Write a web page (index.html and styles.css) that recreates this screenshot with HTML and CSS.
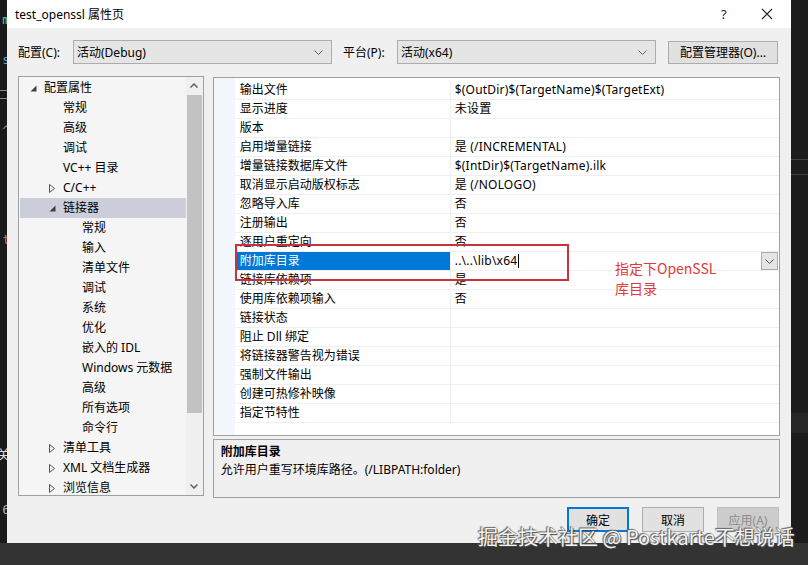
FILE: index.html
```html
<!DOCTYPE html>
<html lang="zh-CN">
<head>
<meta charset="utf-8">
<title>test_openssl 属性页</title>
<link rel="stylesheet" href="styles.css">
</head>
<body>
<div class="screen">
  <div class="main-row">
    <div class="left-strip">
      <span class="frag f1">m</span>
      <span class="frag f2">s</span>
      <span class="frag f3">二</span>
      <span class="frag f4">^</span>
      <span class="frag f5">t</span>
      <span class="frag f6">关</span>
      <span class="frag f7">6</span>
    </div>
    <div class="dialog">
      <div class="titlebar">
        <span class="title">test_openssl 属性页</span>
        <span class="help">?</span>
        <span class="close"><svg width="12" height="12" viewBox="0 0 12 12"><path d="M1 1 L11 11 M11 1 L1 11" stroke="#222" stroke-width="1.1" fill="none"/></svg></span>
      </div>
      <div class="dlg-body">
        <div class="config-row">
          <span class="cfg-label">配置(C):</span>
          <div class="combo"><span>活动(Debug)</span><svg class="chev" width="9" height="5" viewBox="0 0 9 5"><polyline points="0.5,0.5 4.5,4.5 8.5,0.5" stroke="#606060" fill="none"/></svg></div>
          <span class="cfg-label plat">平台(P):</span>
          <div class="combo"><span>活动(x64)</span><svg class="chev" width="9" height="5" viewBox="0 0 9 5"><polyline points="0.5,0.5 4.5,4.5 8.5,0.5" stroke="#606060" fill="none"/></svg></div>
          <button class="btn cfg-mgr">配置管理器(O)...</button>
        </div>
        <div class="content">
          <div class="tree">
            <div class="tree-rows">
              <div class="trow l0"><span class="arrow"><svg width="7" height="7" viewBox="0 0 7 7"><polygon points="6.5,0.5 6.5,6.5 0.5,6.5" fill="#404040"/></svg></span>配置属性</div>
              <div class="trow l1"><span class="arrow"></span>常规</div>
              <div class="trow l1"><span class="arrow"></span>高级</div>
              <div class="trow l1"><span class="arrow"></span>调试</div>
              <div class="trow l1"><span class="arrow"></span>VC++ 目录</div>
              <div class="trow l1"><span class="arrow"><svg width="6" height="9" viewBox="0 0 6 9"><polygon points="0.5,0.5 5.5,4.5 0.5,8.5" fill="none" stroke="#555"/></svg></span>C/C++</div>
              <div class="trow l1 sel"><span class="arrow"><svg width="7" height="7" viewBox="0 0 7 7"><polygon points="6.5,0.5 6.5,6.5 0.5,6.5" fill="#404040"/></svg></span>链接器</div>
              <div class="trow l2"><span class="arrow"></span>常规</div>
              <div class="trow l2"><span class="arrow"></span>输入</div>
              <div class="trow l2"><span class="arrow"></span>清单文件</div>
              <div class="trow l2"><span class="arrow"></span>调试</div>
              <div class="trow l2"><span class="arrow"></span>系统</div>
              <div class="trow l2"><span class="arrow"></span>优化</div>
              <div class="trow l2"><span class="arrow"></span>嵌入的 IDL</div>
              <div class="trow l2"><span class="arrow"></span>Windows 元数据</div>
              <div class="trow l2"><span class="arrow"></span>高级</div>
              <div class="trow l2"><span class="arrow"></span>所有选项</div>
              <div class="trow l2"><span class="arrow"></span>命令行</div>
              <div class="trow l1"><span class="arrow"><svg width="6" height="9" viewBox="0 0 6 9"><polygon points="0.5,0.5 5.5,4.5 0.5,8.5" fill="none" stroke="#555"/></svg></span>清单工具</div>
              <div class="trow l1"><span class="arrow"><svg width="6" height="9" viewBox="0 0 6 9"><polygon points="0.5,0.5 5.5,4.5 0.5,8.5" fill="none" stroke="#555"/></svg></span>XML 文档生成器</div>
              <div class="trow l1"><span class="arrow"><svg width="6" height="9" viewBox="0 0 6 9"><polygon points="0.5,0.5 5.5,4.5 0.5,8.5" fill="none" stroke="#555"/></svg></span>浏览信息</div>
            </div>
            <div class="scrollbar">
              <div class="sb-btn"><svg width="8" height="5" viewBox="0 0 8 5"><polyline points="0.5,4.5 4,1 7.5,4.5" stroke="#606060" stroke-width="1.5" fill="none"/></svg></div>
              <div class="sb-track"><div class="sb-thumb"></div></div>
              <div class="sb-btn"><svg width="8" height="5" viewBox="0 0 8 5"><polyline points="0.5,0.5 4,4 7.5,0.5" stroke="#606060" stroke-width="1.5" fill="none"/></svg></div>
            </div>
          </div>
          <div class="right-col">
            <div class="grid">
              <div class="gutter"></div>
              <div class="grows">
                <div class="grow"><div class="gname">输出文件</div><div class="gval">$(OutDir)$(TargetName)$(TargetExt)</div></div>
                <div class="grow"><div class="gname">显示进度</div><div class="gval">未设置</div></div>
                <div class="grow"><div class="gname">版本</div><div class="gval"></div></div>
                <div class="grow"><div class="gname">启用增量链接</div><div class="gval">是 (/INCREMENTAL)</div></div>
                <div class="grow"><div class="gname">增量链接数据库文件</div><div class="gval">$(IntDir)$(TargetName).ilk</div></div>
                <div class="grow"><div class="gname">取消显示启动版权标志</div><div class="gval">是 (/NOLOGO)</div></div>
                <div class="grow"><div class="gname">忽略导入库</div><div class="gval">否</div></div>
                <div class="grow"><div class="gname">注册输出</div><div class="gval">否</div></div>
                <div class="grow"><div class="gname">逐用户重定向</div><div class="gval">否</div></div>
                <div class="grow selrow"><div class="gname">附加库目录</div><div class="gval"><span class="edit">..\..\lib\x64<span class="caret"></span></span><span class="dd"><svg width="9" height="5" viewBox="0 0 9 5"><polyline points="0.5,0.5 4.5,4.5 8.5,0.5" stroke="#505050" fill="none"/></svg></span></div></div>
                <div class="grow"><div class="gname">链接库依赖项</div><div class="gval">是</div></div>
                <div class="grow"><div class="gname">使用库依赖项输入</div><div class="gval">否</div></div>
                <div class="grow"><div class="gname">链接状态</div><div class="gval"></div></div>
                <div class="grow"><div class="gname">阻止 Dll 绑定</div><div class="gval"></div></div>
                <div class="grow"><div class="gname">将链接器警告视为错误</div><div class="gval"></div></div>
                <div class="grow"><div class="gname">强制文件输出</div><div class="gval"></div></div>
                <div class="grow"><div class="gname">创建可热修补映像</div><div class="gval"></div></div>
                <div class="grow"><div class="gname">指定节特性</div><div class="gval"></div></div>
              </div>
            </div>
            <div class="desc">
              <div class="desc-title">附加库目录</div>
              <div class="desc-text">允许用户重写环境库路径。(/LIBPATH:folder)</div>
            </div>
          </div>
        </div>
        <div class="btn-row">
          <button class="btn ok">确定</button>
          <button class="btn">取消</button>
          <button class="btn disabled">应用(A)</button>
        </div>
      </div>
    </div>
    <div class="right-strip">
      <div class="rs-line l1"></div>
      <div class="rs-line l2"></div>
      <div class="rs-band"></div>
    </div>
  </div>
  <div class="bottom-strip"></div>
  <div class="redbox"></div>
  <div class="note">指定下OpenSSL<br>库目录</div>
  <div class="watermark">掘金技术社区 @ Postkarte不想说话</div>
</div>
</body>
</html>
```
FILE: styles.css
```css
* { box-sizing: border-box; }
body {
  margin: 0;
  width: 808px;
  height: 565px;
  overflow: hidden;
  background: #1e1e1e;
  font-family: "Segoe UI", "Noto Sans", "Noto Sans CJK SC", sans-serif;
  font-size: 12px;
  color: #000;
}
.screen { position: relative; width: 808px; height: 565px; display: flex; flex-direction: column; }
.main-row { display: flex; height: 543px; }
.left-strip { position: relative; width: 7px; background: #1a1a1a; overflow: hidden; }
.frag { position: absolute; right: -3px; font-size: 13px; line-height: 14px; font-family: "DejaVu Sans Mono", monospace; }
.f1 { top: 13px; color: #4ec9b0; }
.f2 { top: 53px; color: #6a9fd4; }
.f3 { top: 88px; color: #888; }
.f4 { top: 124px; color: #888; }
.f5 { top: 233px; color: #d16969; }
.f6 { top: 448px; color: #ddd; }
.f7 { top: 503px; color: #aaa; }
.dialog { width: 784px; display: flex; flex-direction: column; background: #f0f0f0; }
.titlebar { height: 28px; background: #fff; display: flex; align-items: center; padding-left: 8px; }
.title { flex: 1; font-size: 12px; }
.help { width: 40px; font-size: 13px; color: #222; }
.close { width: 30px; display: flex; align-items: center; }
.dlg-body { flex: 1; display: flex; flex-direction: column; padding: 12px 11px 0 11px; }
.config-row { display: flex; align-items: center; height: 24px; }
.cfg-label { width: 55px; }
.cfg-label.plat { width: 54px; margin-left: 11px; }
.combo {
  width: 259px; height: 24px; background: #e5e5e5; border: 1px solid #acacac;
  display: flex; align-items: center; justify-content: space-between; padding: 0 8px 0 3px;
}
.btn {
  font: inherit; color: #000; background: #e1e1e1; border: 1px solid #adadad;
  height: 24px; padding: 0; display: flex; align-items: center; justify-content: center;
}
.cfg-mgr { width: 110px; margin-left: 12px; height: 23px; }
.content { display: flex; margin-top: 12px; height: 422px; }
.tree { width: 186px; height: 420px; border: 1px solid #a0a0a0; background: #f5f5f5; display: flex; }
.tree-rows { flex: 1; overflow: hidden; padding-left: 1px; padding-top: 1px; }
.trow { height: 20px; line-height: 20px; display: flex; align-items: center; white-space: nowrap; }
.trow .arrow { width: 16px; height: 20px; display: flex; align-items: center; padding-left: 2px; flex: none; }
.l0 { padding-left: 8px; }
.l1 { padding-left: 27px; }
.l2 { padding-left: 46px; }
.trow.sel { background: #cccedb; }
.scrollbar { width: 17px; display: flex; flex-direction: column; background: #f0f0f0; }
.sb-btn { height: 17px; display: flex; align-items: center; justify-content: center; }
.sb-track { flex: 1; padding: 1px 1px 0 1px; }
.sb-thumb { height: 318px; background: #c2c2c2; }
.right-col { width: 568px; margin-left: 9px; display: flex; flex-direction: column; }
.grid { margin-top: 1px; height: 359px; border: 1px solid #a0a0a0; background: #fff; display: flex; }
.gutter { width: 21px; background: #f3f6fb; }
.grows { flex: 1; padding-top: 3px; }
.grow { display: flex; height: 19px; border-bottom: 1px solid #f0f0f0; }
.gname { width: 215px; padding-left: 5px; line-height: 18px; white-space: nowrap; }
.gval { flex: 1; border-left: 1px solid #f0f0f0; padding-left: 4px; line-height: 18px; white-space: nowrap; display: flex; align-items: center; justify-content: space-between; letter-spacing: 0.2px; }
.selrow .gname { background: #0078d7; color: #fff; }
.edit { display: flex; align-items: center; }
.caret { display: inline-block; width: 1px; height: 14px; background: #000; margin-left: 1px; }
.dd { width: 17px; height: 18px; background: #e5e5e5; border: 1px solid #acacac; display: flex; align-items: center; justify-content: center; margin-right: 1px; }
.desc { margin-top: 3px; height: 59px; border: 1px solid #a0a0a0; padding: 3px 7px; line-height: 18px; }
.desc-title { font-weight: bold; }
.btn-row { display: flex; justify-content: flex-end; gap: 13px; margin-top: 9px; padding-right: 1px; }
.btn-row .btn { width: 62px; height: 25px; }
.btn.ok { border: 2px solid #0078d7; }
.btn.disabled { background: #cccccc; border-color: #bfbfbf; color: #8d8d8d; }
.right-strip { position: relative; flex: 1; background: #1c1c1c; }
.rs-line { position: absolute; left: 0; right: 0; height: 1px; background: #3f3f3f; }
.rs-line.l1 { top: 159px; }
.rs-line.l2 { top: 174px; }
.rs-band { position: absolute; left: 0; right: 0; top: 413px; height: 20px; background: #262626; }
.bottom-strip { flex: 1; background: #333333; }
.redbox { position: absolute; left: 235px; top: 244px; width: 334px; height: 37px; border: 2px solid #c8323c; }
.note { position: absolute; left: 615px; top: 258px; font-size: 14px; line-height: 20px; color: #e03a3a; font-family: "Noto Sans CJK SC", sans-serif; }
.watermark {
  position: absolute; left: 478px; top: 523px; font-size: 20px; line-height: 28px; white-space: nowrap;
  font-family: "Noto Sans CJK SC", sans-serif; color: #f4f4f4;
  text-shadow: 0 0 1px #555, 1px 1px 1px #444, -1px -1px 1px #666;
}
```
